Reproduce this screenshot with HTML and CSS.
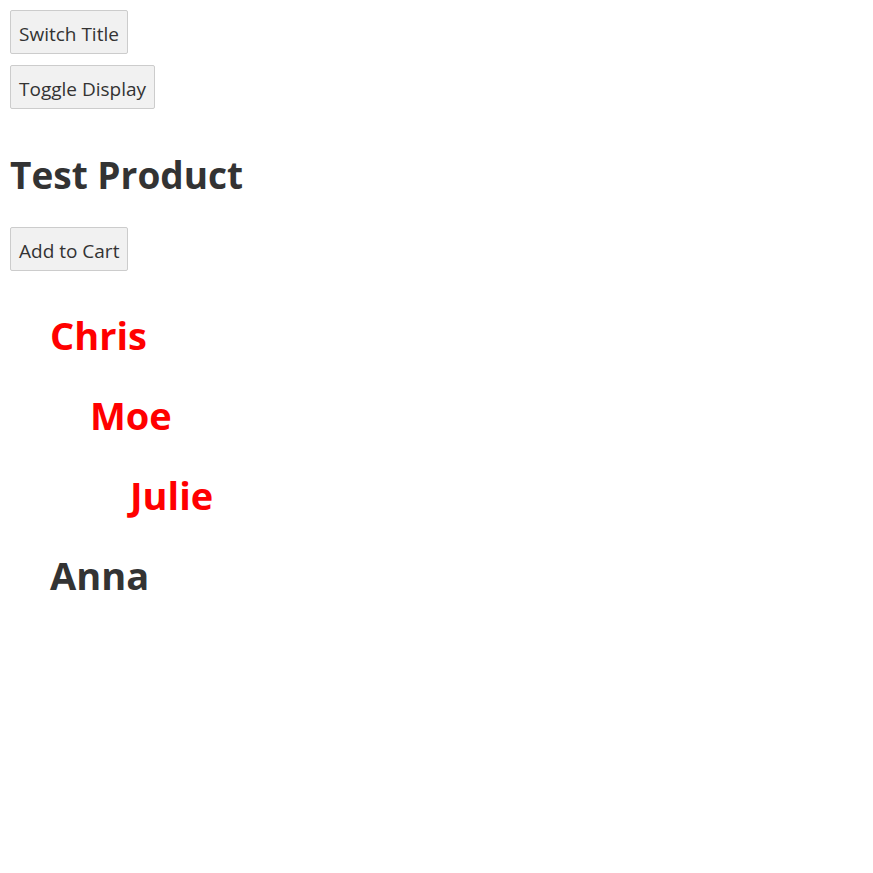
FILE: index.html
```html
<!DOCTYPE html>
<html>
<head>
<meta charset="utf-8">
<link rel="stylesheet" href="styles.css">
</head>
<body>
<div class="controls">
  <button class="btn">Switch Title</button>
  <button class="btn">Toggle Display</button>
</div>
<h1 class="title">Test Product</h1>
<button class="btn">Add to Cart</button>
<ul class="people">
  <li class="person red">Chris
    <ul class="people">
      <li class="person red">Moe
        <ul class="people">
          <li class="person red">Julie</li>
        </ul>
      </li>
    </ul>
  </li>
  <li class="person">Anna</li>
</ul>
</body>
</html>
```
FILE: styles.css
```css
body {
  margin: 0;
  padding: 10px;
  font-family: "Open Sans", "Noto Sans", sans-serif;
  color: #333;
  background: #fff;
}
.controls {
  display: flex;
  flex-direction: column;
  align-items: flex-start;
  gap: 11px;
}
.btn {
  font-family: "Open Sans", "Noto Sans", sans-serif;
  font-size: 19px;
  color: #333;
  background: #f1f1f1;
  border: 1px solid #ccc;
  border-radius: 2px;
  height: 44px;
  padding: 4px 8px 0;
  margin: 0;
}
.title {
  font-size: 37px;
  font-weight: 700;
  line-height: 48px;
  margin: 42px 0 28px;
}
.people {
  list-style: none;
  margin: 0;
  padding: 0 0 0 40px;
}
.person {
  font-size: 38px;
  font-weight: 700;
  line-height: 48px;
  padding-top: 32px;
}
.red { color: #f00; }
.person:not(.red) { color: #333; }
body > .people { margin-top: 8px; }
```
